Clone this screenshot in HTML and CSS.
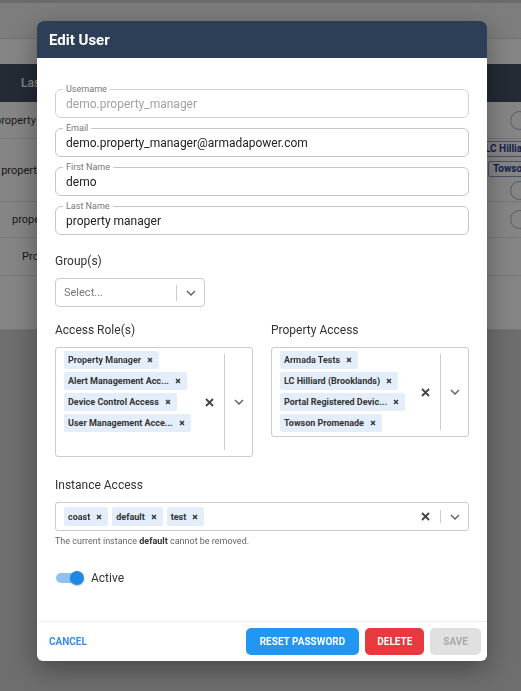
FILE: index.html
```html
<!DOCTYPE html>
<html lang="en">
<head>
    <meta charset="UTF-8">
    <meta name="viewport" content="width=device-width, initial-scale=1.0">
    <title>Users</title>
    <link rel="stylesheet" href="styles.css">
</head>
<body>
    <!-- user table behind the dialog -->
    <div class="page">
        <div class="topbar"></div>
        <div class="toolbar"></div>
        <div class="thead"><span>Last Name</span></div>
        <div class="row row-1">
            <div class="cell-left">property manager demo user</div>
            <div class="cell-right"><span class="round-btn"></span></div>
        </div>
        <div class="row row-2">
            <div class="cell-left">property manager demo</div>
            <div class="cell-right stack">
                <span class="tag tag-wide">LC Hilliard (Brooklands)</span>
                <span class="tag">Towson Promenade</span>
                <span class="round-btn"></span>
            </div>
        </div>
        <div class="row row-3">
            <div class="cell-left">property manager 2</div>
            <div class="cell-right"><span class="round-btn"></span></div>
        </div>
        <div class="row row-4">
            <div class="cell-left">Property Owner</div>
            <div class="cell-right"></div>
        </div>
        <div class="row row-5"></div>
    </div>

    <div class="backdrop"></div>

    <div class="modal">
        <div class="modal-header">Edit User</div>
        <div class="modal-body">
            <div class="field disabled">
                <span class="field-label">Username</span>
                <div class="field-value">demo.property_manager</div>
            </div>
            <div class="field">
                <span class="field-label">Email</span>
                <div class="field-value">demo.property_manager@armadapower.com</div>
            </div>
            <div class="field">
                <span class="field-label">First Name</span>
                <div class="field-value">demo</div>
            </div>
            <div class="field">
                <span class="field-label">Last Name</span>
                <div class="field-value">property manager</div>
            </div>

            <div class="section-label first">Group(s)</div>
            <div class="select">
                <span class="placeholder">Select...</span>
                <span class="sep"></span>
                <span class="chev">
                    <svg width="10" height="6" viewBox="0 0 10 6"><path d="M1 1l4 4 4-4" fill="none" stroke="#666" stroke-width="1.5"/></svg>
                </span>
            </div>

            <div class="columns">
                <div>
                    <div class="section-label">Access Role(s)</div>
                    <div class="multi roles">
                        <div class="chips stacked">
                            <span class="chip">Property Manager <svg width="6" height="6" viewBox="0 0 6 6"><path d="M1 1l4 4M5 1L1 5" stroke="#333" stroke-width="1.4"/></svg></span>
                            <span class="chip">Alert Management Acc... <svg width="6" height="6" viewBox="0 0 6 6"><path d="M1 1l4 4M5 1L1 5" stroke="#333" stroke-width="1.4"/></svg></span>
                            <span class="chip">Device Control Access <svg width="6" height="6" viewBox="0 0 6 6"><path d="M1 1l4 4M5 1L1 5" stroke="#333" stroke-width="1.4"/></svg></span>
                            <span class="chip">User Management Acce... <svg width="6" height="6" viewBox="0 0 6 6"><path d="M1 1l4 4M5 1L1 5" stroke="#333" stroke-width="1.4"/></svg></span>
                        </div>
                        <span class="clear"><svg width="9" height="9" viewBox="0 0 9 9"><path d="M1 1l7 7M8 1L1 8" stroke="#444" stroke-width="1.8"/></svg></span>
                        <span class="sep"></span>
                        <span class="chev"><svg width="10" height="6" viewBox="0 0 10 6"><path d="M1 1l4 4 4-4" fill="none" stroke="#666" stroke-width="1.5"/></svg></span>
                    </div>
                </div>
                <div>
                    <div class="section-label">Property Access</div>
                    <div class="multi">
                        <div class="chips stacked">
                            <span class="chip">Armada Tests <svg width="6" height="6" viewBox="0 0 6 6"><path d="M1 1l4 4M5 1L1 5" stroke="#333" stroke-width="1.4"/></svg></span>
                            <span class="chip">LC Hilliard (Brooklands) <svg width="6" height="6" viewBox="0 0 6 6"><path d="M1 1l4 4M5 1L1 5" stroke="#333" stroke-width="1.4"/></svg></span>
                            <span class="chip">Portal Registered Devic... <svg width="6" height="6" viewBox="0 0 6 6"><path d="M1 1l4 4M5 1L1 5" stroke="#333" stroke-width="1.4"/></svg></span>
                            <span class="chip">Towson Promenade <svg width="6" height="6" viewBox="0 0 6 6"><path d="M1 1l4 4M5 1L1 5" stroke="#333" stroke-width="1.4"/></svg></span>
                        </div>
                        <span class="clear"><svg width="9" height="9" viewBox="0 0 9 9"><path d="M1 1l7 7M8 1L1 8" stroke="#444" stroke-width="1.8"/></svg></span>
                        <span class="sep"></span>
                        <span class="chev"><svg width="10" height="6" viewBox="0 0 10 6"><path d="M1 1l4 4 4-4" fill="none" stroke="#666" stroke-width="1.5"/></svg></span>
                    </div>
                </div>
            </div>

            <div class="section-label instance">Instance Access</div>
            <div class="multi inline">
                <div class="chips">
                    <span class="chip">coast <svg width="6" height="6" viewBox="0 0 6 6"><path d="M1 1l4 4M5 1L1 5" stroke="#333" stroke-width="1.4"/></svg></span>
                    <span class="chip">default <svg width="6" height="6" viewBox="0 0 6 6"><path d="M1 1l4 4M5 1L1 5" stroke="#333" stroke-width="1.4"/></svg></span>
                    <span class="chip">test <svg width="6" height="6" viewBox="0 0 6 6"><path d="M1 1l4 4M5 1L1 5" stroke="#333" stroke-width="1.4"/></svg></span>
                </div>
                <span class="clear"><svg width="9" height="9" viewBox="0 0 9 9"><path d="M1 1l7 7M8 1L1 8" stroke="#444" stroke-width="1.8"/></svg></span>
                <span class="sep"></span>
                <span class="chev"><svg width="10" height="6" viewBox="0 0 10 6"><path d="M1 1l4 4 4-4" fill="none" stroke="#666" stroke-width="1.5"/></svg></span>
            </div>
            <div class="help">The current instance <b>default</b> cannot be removed.</div>

            <div class="toggle-row">
                <span class="track"><span class="knob"></span></span>
                <span>Active</span>
            </div>
        </div>
        <div class="modal-footer">
            <button class="btn-text">Cancel</button>
            <div class="actions">
                <button class="btn btn-blue">Reset Password</button>
                <button class="btn btn-red">Delete</button>
                <button class="btn btn-disabled">Save</button>
            </div>
        </div>
    </div>
</body>
</html>
```

FILE: styles.css
```css
* {
    box-sizing: border-box;
}
body {
    margin: 0;
    font-family: Roboto, "Liberation Sans", Arial, sans-serif;
    color: #222;
    background: #d4d4d4;
    overflow: hidden;
}

/* table page */
.page {
    width: 100%;
    height: 100vh;
    background: #d4d4d4;
    overflow: hidden;
}
.topbar {
    height: 39px;
    background: #f0f0f0;
    border-top: 3px solid #cdcdcd;
    border-bottom: 1px solid #d8d8d8;
}
.toolbar {
    height: 25px;
    background: #fff;
}
.thead {
    height: 38px;
    background: #465364;
    color: #fff;
    font-size: 12px;
    font-weight: 500;
    display: flex;
    align-items: center;
    padding-left: 21px;
}
.row {
    display: flex;
    justify-content: space-between;
    align-items: center;
    background: #fff;
    border-bottom: 1px solid #e2e2e2;
    font-size: 11px;
    color: #333;
}
.row-1 { height: 37px; }
.row-2 { height: 63px; }
.row-3 { height: 36px; }
.row-4 { height: 38px; }
.row-5 { height: 54px; }
.cell-left {
    width: 130px;
    margin-left: -5px;
    text-align: center;
    white-space: nowrap;
}
.cell-right {
    width: 33px;
    flex-shrink: 0;
    display: flex;
    align-items: center;
}
.cell-right.stack {
    flex-direction: column;
    align-items: flex-start;
    gap: 4px;
}
.round-btn {
    flex-shrink: 0;
    width: 19px;
    height: 19px;
    margin-left: 22px;
    border: 1px solid #a3adc4;
    border-radius: 50%;
    background: #fff;
}
.tag {
    height: 16px;
    padding: 0 4px;
    border: 1px solid #8c9bc8;
    border-radius: 2px;
    color: #2b3d8c;
    font-size: 10px;
    font-weight: 700;
    line-height: 14px;
    white-space: nowrap;
}
.tag-wide {
    margin-left: -8px;
}

.backdrop {
    position: fixed;
    inset: 0;
    background: rgba(0, 0, 0, 0.48);
}

/* dialog */
.modal {
    position: absolute;
    top: 21px;
    left: 37px;
    width: 450px;
    height: 640px;
    background: #fff;
    border-radius: 6px;
    box-shadow: 0 8px 26px rgba(0, 0, 0, 0.35);
    display: flex;
    flex-direction: column;
    overflow: hidden;
}
.modal-header {
    height: 37px;
    flex-shrink: 0;
    background: #2d3f56;
    color: #fff;
    font-size: 15px;
    font-weight: 700;
    display: flex;
    align-items: center;
    padding: 0 12px;
}
.modal-body {
    flex: 1;
    padding: 31px 18px 0;
}
.field {
    position: relative;
    height: 29px;
    border: 1px solid #c6c6c6;
    border-radius: 6px;
    display: flex;
    align-items: center;
    padding: 0 10px;
    margin-bottom: 10px;
    font-size: 12px;
}
.field-label {
    position: absolute;
    top: -6px;
    left: 7px;
    padding: 0 3px;
    background: #fff;
    font-size: 9px;
    line-height: 10px;
    color: #777;
}
.field.disabled .field-value {
    color: #a2a2a2;
}
.field.disabled {
    border-color: #d2d2d2;
}
.section-label {
    font-size: 12px;
    line-height: 16px;
    color: #333;
    margin-bottom: 9px;
}
.section-label.first {
    margin-top: 18px;
}
.select {
    width: 150px;
    height: 29px;
    border: 1px solid #cbcbcb;
    border-radius: 4px;
    display: flex;
    align-items: center;
    margin-bottom: 15px;
}
.select .placeholder {
    flex: 1;
    padding-left: 8px;
    font-size: 11px;
    color: #777;
}
.select .sep {
    width: 1px;
    height: 16px;
    background: #ccc;
}
.chev {
    width: 27px;
    display: flex;
    align-items: center;
    justify-content: center;
}
.columns {
    display: grid;
    grid-template-columns: 198px 198px;
    column-gap: 18px;
    align-items: start;
}
.multi {
    display: flex;
    align-items: center;
    border: 1px solid #cbcbcb;
    border-radius: 3px;
}
.multi .chips {
    flex: 1;
    display: flex;
    gap: 3px;
    padding: 3px 8px 4px;
}
.multi .chips.stacked {
    flex-direction: column;
    align-items: flex-start;
}
.multi.roles .chips {
    padding-bottom: 24px;
}
.multi .sep {
    align-self: stretch;
    width: 1px;
    margin: 6px 0;
    background: #ccc;
}
.clear {
    width: 20px;
    margin-right: 5px;
    display: flex;
    align-items: center;
    justify-content: center;
}
.chip {
    height: 18px;
    display: inline-flex;
    align-items: center;
    gap: 6px;
    padding: 0 6px 0 4px;
    background: #e3eefa;
    border-radius: 2px;
    font-size: 9px;
    font-weight: 700;
    color: #333;
    white-space: nowrap;
}
.section-label.instance {
    margin-top: 20px;
}
.multi.inline {
    height: 29px;
}
.multi.inline .chips {
    padding: 0 8px;
    gap: 4px;
}
.multi.inline .chips .chip {
    height: 19px;
}
.multi.inline .sep {
    margin: 7px 0;
}
.help {
    margin-top: 5px;
    font-size: 9px;
    line-height: 11px;
    color: #666;
}
.help b {
    color: #333;
}
.toggle-row {
    margin-top: 23px;
    height: 16px;
    display: flex;
    align-items: center;
    gap: 9px;
    font-size: 12px;
    color: #333;
    padding-left: 1px;
}
.track {
    width: 26px;
    height: 10px;
    border-radius: 5px;
    background: #8fc1f5;
    display: flex;
    align-items: center;
}
.knob {
    width: 14px;
    height: 14px;
    margin-left: auto;
    margin-right: -2px;
    border-radius: 50%;
    background: #1e88e5;
    box-shadow: 0 1px 2px rgba(0, 0, 0, 0.25);
}

/* footer */
.modal-footer {
    flex-shrink: 0;
    border-top: 1px solid #eeeeee;
    padding: 6px 6px 6px 12px;
    display: flex;
    align-items: center;
    justify-content: space-between;
}
.modal-footer button {
    font-family: inherit;
    font-size: 10px;
    font-weight: 700;
    text-transform: uppercase;
    border: none;
    cursor: pointer;
}
.btn-text {
    background: none;
    color: #3a8ee6;
    padding: 0;
}
.actions {
    display: flex;
    gap: 6px;
}
.btn {
    height: 27px;
    padding: 0 13px;
    border-radius: 5px;
    color: #fff;
}
.btn-blue {
    background: #2196f3;
    padding: 0 14px;
}
.btn-red {
    background: #e8393f;
    padding: 0 12px;
}
.btn-disabled {
    background: #e0e0e0;
    color: #a8a8a8;
}
```
